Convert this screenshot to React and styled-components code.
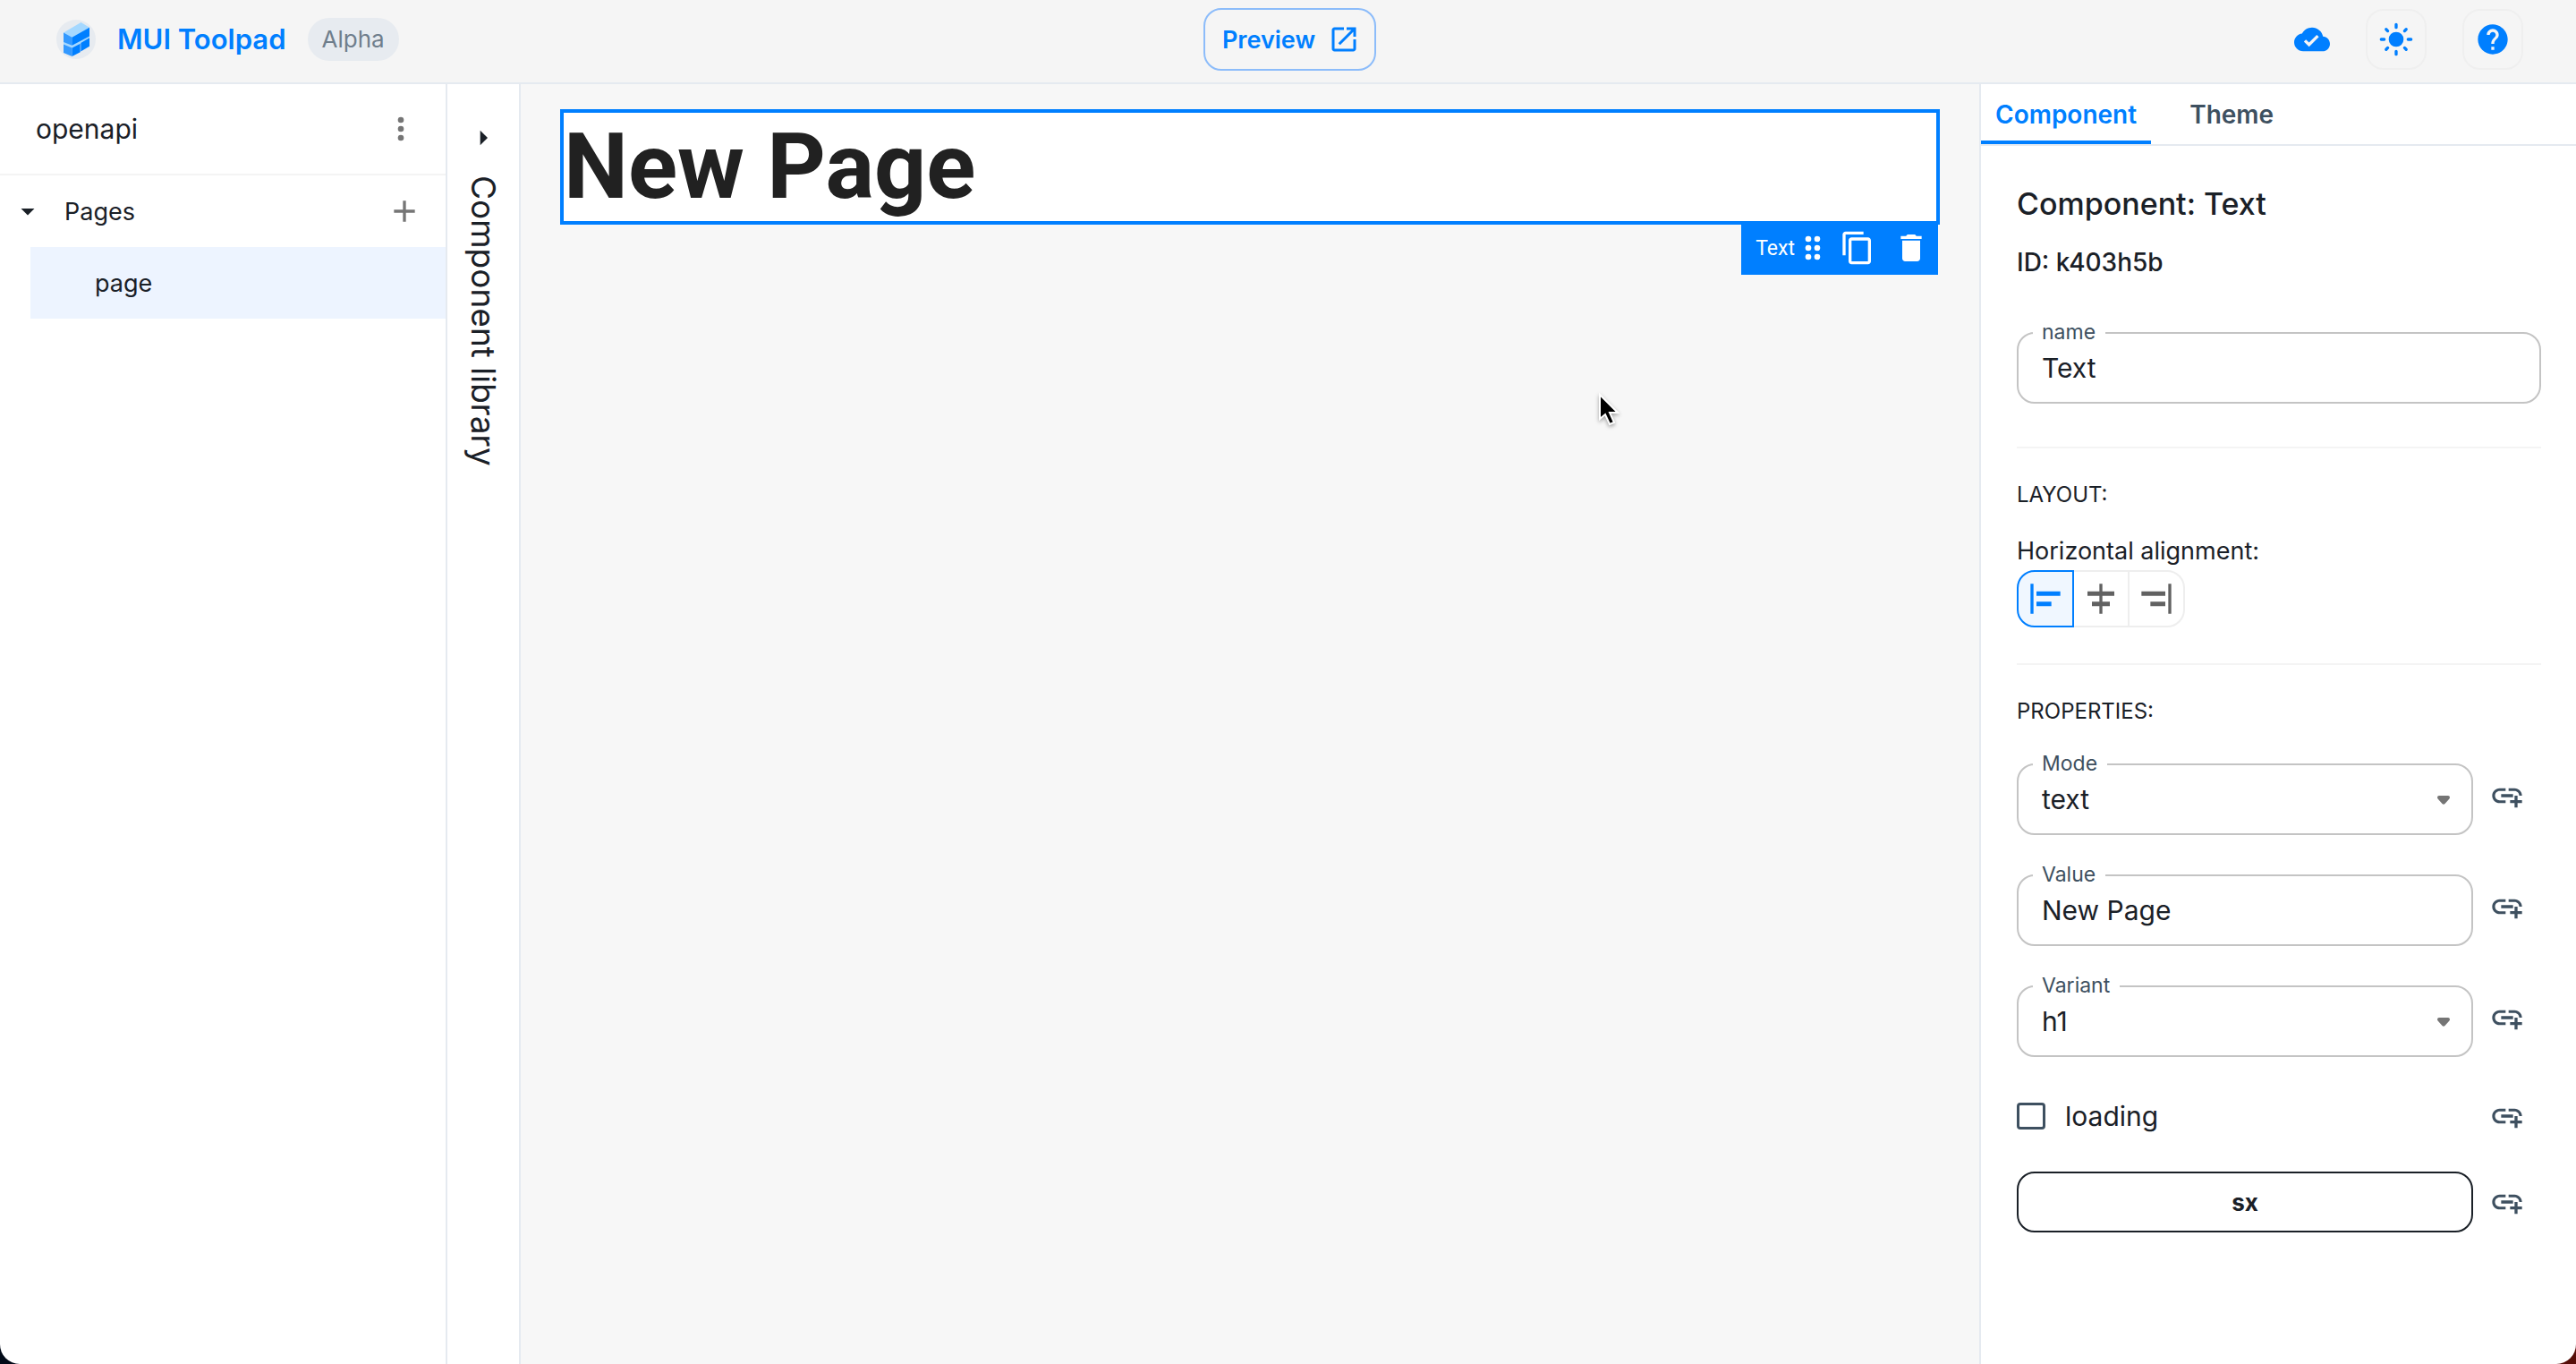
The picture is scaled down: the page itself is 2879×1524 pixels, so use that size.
import React, { useState } from "react";
import styled, { createGlobalStyle, css } from "styled-components";

const color = {
  primary: "#007fff",
  text: "#1a2027",
  secondary: "#3e5060",
  muted: "#6f7e8c",
  icon: "#757575",
  line: "#e5eaf0",
  divider: "#f4f4f4",
  control: "#eeeeee",
  field: "#c4c4c4",
};

const GlobalStyle = createGlobalStyle`
  *, *::before, *::after { box-sizing: border-box; }
  body {
    margin: 0;
    background: linear-gradient(to right, #020a18 50%, #560d08 50%);
    color: ${color.text};
    font-family: Inter, "Liberation Sans", sans-serif;
  }
  h1, h2, h3, p, ul { margin: 0; padding: 0; font-weight: 400; }
  button, input, select { font-family: inherit; }
`;

/* ---------- icons ---------- */

const Svg = styled.svg`
  display: block;
  flex: none;
  width: ${(p) => p.$size || 40}px;
  height: ${(p) => p.$size || 40}px;
  fill: currentColor;
`;

const Icon = ({ d, size, children }) => (
  <Svg viewBox="0 0 24 24" $size={size} aria-hidden="true">
    {d ? <path d={d} /> : children}
  </Svg>
);

const paths = {
  open: "M19 19H5V5h7V3H5c-1.11 0-2 .9-2 2v14c0 1.1.89 2 2 2h14c1.1 0 2-.9 2-2v-7h-2v7zM14 3v2h3.59l-9.83 9.83 1.41 1.41L19 6.41V10h2V3h-7z",
  cloud:
    "M19.35 10.04C18.67 6.59 15.64 4 12 4 9.11 4 6.6 5.64 5.35 8.04 2.34 8.36 0 10.91 0 14c0 3.31 2.69 6 6 6h13c2.76 0 5-2.24 5-5 0-2.64-2.05-4.78-4.65-4.96zM10 17l-3.5-3.5 1.41-1.41L10 14.17 15.18 9l1.41 1.41L10 17z",
  help: "M12 2C6.48 2 2 6.48 2 12s4.48 10 10 10 10-4.48 10-10S17.52 2 12 2zm1 17h-2v-2h2v2zm2.07-7.75l-.9.92C13.45 12.9 13 13.5 13 15h-2v-.5c0-1.1.45-2.1 1.17-2.83l1.24-1.26c.37-.36.59-.86.59-1.41 0-1.1-.9-2-2-2s-2 .9-2 2H8c0-2.21 1.79-4 4-4s4 1.79 4 4c0 .88-.36 1.68-.93 2.25z",
  add: "M19 13h-6v6h-2v-6H5v-2h6V5h2v6h6v2z",
  down: "M7 10l5 5 5-5z",
  right: "M10 17l5-5-5-5z",
  copy: "M16 1H4c-1.1 0-2 .9-2 2v14h2V3h12V1zm3 4H8c-1.1 0-2 .9-2 2v14c0 1.1.9 2 2 2h11c1.1 0 2-.9 2-2V7c0-1.1-.9-2-2-2zm0 16H8V7h11v14z",
  trash: "M6 19c0 1.1.9 2 2 2h8c1.1 0 2-.9 2-2V7H6v12zM19 4h-3.5l-1-1h-5l-1 1H5v2h14V4z",
  alignLeft: "M4 22H2V2h2v20zM22 7H6v3h16V7zm-6 7H6v3h10v-3z",
  alignCenter: "M11 2h2v5h8v3h-8v4h5v3h-5v5h-2v-5H6v-3h5v-4H3V7h8V2z",
  alignRight: "M20 2h2v20h-2V2zM2 10h16V7H2v3zm6 7h10v-3H8v3z",
  link: "M8 11h8v2H8zm12.1 1H22c0-2.76-2.24-5-5-5h-4v1.9h4c1.71 0 3.1 1.39 3.1 3.1zM3.9 12c0-1.71 1.39-3.1 3.1-3.1h4V7H7c-2.76 0-5 2.24-5 5s2.24 5 5 5h4v-1.9H7c-1.71 0-3.1-1.39-3.1-3.1zM19 12h-2v3h-3v2h3v3h2v-3h3v-2h-3z",
};

const SunIcon = () => (
  <Icon>
    <circle cx="12" cy="12" r="5" />
    <g stroke="currentColor" strokeWidth="2" strokeLinecap="round">
      <path d="M12 2v2M12 20v2M2 12h2M20 12h2M5.28 5.28l1.07 1.07M17.65 17.65l1.07 1.07M5.28 18.72l1.07-1.07M17.65 6.35l1.07-1.07" />
    </g>
  </Icon>
);

const DotsIcon = ({ columns }) => (
  <Icon>
    {columns.map((x) =>
      [6, 12, 18].map((y) => <circle key={`${x}-${y}`} cx={x} cy={y} r="2" />)
    )}
  </Icon>
);

const LogoSvg = styled.svg`
  display: block;
  width: 44px;
  height: 44px;
`;

const Logo = () => (
  <LogoSvg viewBox="0 0 44 44" aria-hidden="true">
    <circle cx="22" cy="22" r="22" fill="#e7ebf0" />
    <path fill="#a5d8ff" d="M8 14.5 27.5 3l9.500 5.700L37 20l-9 6-11 5.500-9-4z" />
    <path fill="#3399ff" d="M8 14.500l9.500 5.200v9L8 25z" />
    <path fill="#007fff" d="M17.500 19.700 37 8.700v9.800l-19.500 10.200z" />
    <path fill="#3399ff" d="M8 27.500l9.500 4V41L8 37z" />
    <path fill="#007fff" d="M17.500 31.500l9.200-4.800v9.500L17.500 41z" />
    <path fill="#007fff" d="M27.300 26 37 20.300v9.500l-9.700 5.700z" />
  </LogoSvg>
);

/* ---------- frame ---------- */

const Frame = styled.div`
  display: grid;
  grid-template-rows: auto 1fr;
  min-height: 100vh;
  border-radius: 0 0 22px 22px;
  overflow: hidden;
  background: #ffffff;
`;

const Header = styled.header`
  display: grid;
  grid-template-columns: 1fr auto 1fr;
  align-items: center;
  padding: 9px 59px 13px 63px;
  background: #f5f5f5;
  border-bottom: 2px solid ${color.line};
`;

const Brand = styled.div`
  display: flex;
  align-items: center;
  gap: 24px;
`;

const BrandLink = styled.a`
  display: flex;
  align-items: center;
  gap: 24px;
  color: ${color.primary};
  font-size: 31px;
  font-weight: 600;
  line-height: 48px;
  text-decoration: none;
`;

const Chip = styled.span`
  padding: 0 16px;
  border-radius: 24px;
  background: #e7ebf0;
  color: ${color.muted};
  font-size: 26px;
  line-height: 48px;
`;

const bareButton = css`
  display: flex;
  align-items: center;
  justify-content: center;
  padding: 0;
  border: 0;
  background: none;
  color: inherit;
  cursor: pointer;
`;

const PreviewButton = styled.button`
  ${bareButton}
  gap: 14px;
  height: 70px;
  padding: 0 16px 0 19px;
  border: 2px solid #8cbcfa;
  border-radius: 20px;
  color: ${color.primary};
  font-size: 27px;
  font-weight: 600;
`;

const Actions = styled.div`
  display: flex;
  justify-content: flex-end;
  align-items: center;
  gap: 40px;
  color: ${color.primary};
`;

const SquareButton = styled.button`
  ${bareButton}
  width: 68px;
  height: 68px;
  border: 2px solid #efefef;
  border-radius: 20px;
`;

const Workspace = styled.div`
  display: grid;
  grid-template-columns: 500px 82px minmax(0, 1fr) 667px;
`;

/* ---------- sidebar ---------- */

const Sidebar = styled.nav`
  border-right: 2px solid ${color.line};
`;

const SidebarHeader = styled.div`
  display: flex;
  align-items: center;
  justify-content: space-between;
  height: 102px;
  padding: 0 30px 0 40px;
  border-bottom: 2px solid ${color.divider};
  font-size: 30px;
`;

const IconButton = styled.button`
  ${bareButton}
  color: ${color.icon};
`;

const TreeRow = styled.div`
  display: flex;
  align-items: center;
  height: 80px;
  padding: 0 26px 0 13px;
`;

const TreeToggle = styled.button`
  ${bareButton}
  justify-content: flex-start;
  flex: 1;
  gap: 23px;
  font-size: 27px;
`;

const TreeItem = styled.a`
  display: flex;
  align-items: center;
  height: 80px;
  margin-left: 34px;
  padding-left: 72px;
  background: #edf4ff;
  color: ${color.text};
  font-size: 27px;
  text-decoration: none;
`;

const Rail = styled.aside`
  border-right: 2px solid ${color.line};
  padding-top: 40px;
`;

const RailButton = styled.button`
  ${bareButton}
  flex-direction: column;
  gap: 22px;
  width: 100%;
  font-size: 37px;
  line-height: 48px;
`;

const RailLabel = styled.span`
  writing-mode: vertical-rl;
`;

/* ---------- canvas ---------- */

const Canvas = styled.main`
  position: relative;
  padding: 28px 44px;
  background: #f7f7f7;
`;

const Selection = styled.section`
  position: relative;
  border: 4px solid ${color.primary};
  background: #ffffff;
`;

const PageHeading = styled.h1`
  && {
    color: #212121;
    font-family: Roboto, "Liberation Sans", sans-serif;
    font-size: 102px;
    font-weight: 700;
    line-height: 121px;
  }
`;

const NodeHud = styled.div`
  position: absolute;
  top: 100%;
  right: -2px;
  display: flex;
  align-items: center;
  height: 60px;
  padding-left: 16px;
  background: ${color.primary};
  color: #ffffff;
  font-family: Roboto, "Liberation Sans", sans-serif;
  font-size: 23px;
`;

const HudButton = styled.button`
  ${bareButton}
  width: 60px;
  height: 60px;
`;

const Pointer = styled.svg`
  position: absolute;
  top: 343px;
  left: 73.8%;
  width: 28px;
  height: 40px;
  filter: drop-shadow(0 2px 2px rgba(0, 0, 0, 0.35));
`;

/* ---------- inspector ---------- */

const Inspector = styled.aside`
  border-left: 2px solid ${color.line};
`;

const Tabs = styled.div`
  display: flex;
  border-bottom: 2px solid ${color.line};
`;

const Tab = styled.button`
  ${bareButton}
  min-width: 180px;
  height: 67px;
  padding: 4px 16px 0;
  border-bottom: 4px solid ${(p) => (p.$active ? color.primary : "transparent")};
  color: ${(p) => (p.$active ? color.primary : color.secondary)};
  font-size: 28px;
  font-weight: 600;
`;

const InspectorBody = styled.div`
  display: flex;
  flex-direction: column;
  padding: 36px 39px 40px 40px;
`;

const Title = styled.h2`
  && {
    margin-bottom: 14px;
    font-size: 34px;
    font-weight: 500;
    line-height: 58px;
  }
`;

const NodeId = styled.p`
  && {
    margin-bottom: 40px;
    font-size: 28px;
    font-weight: 500;
    line-height: 44px;
  }
`;

const Rule = styled.hr`
  width: 100%;
  height: 2px;
  margin: 40px 0 32px;
  border: 0;
  background: ${color.divider};
`;

const Overline = styled.h3`
  && {
    margin-bottom: 22px;
    font-size: 24px;
    line-height: 40px;
    text-transform: uppercase;
  }
`;

const GroupLabel = styled.p`
  font-size: 27px;
  line-height: 42px;
`;

const ToggleGroup = styled.div`
  display: flex;
`;

const Toggle = styled.button`
  ${bareButton}
  width: 64px;
  height: 64px;
  border: 2px solid ${color.control};
  color: #616161;

  & + & {
    margin-left: -2px;
  }
  &:first-child {
    border-radius: 20px 0 0 20px;
  }
  &:last-child {
    border-radius: 0 20px 20px 0;
  }
  ${(p) =>
    p.$active &&
    css`
      z-index: 1;
      border-color: ${color.primary};
      background: #f0f7ff;
      color: ${color.primary};
    `}
`;

const FieldBox = styled.div`
  position: relative;
  flex: 1;
  margin: 16px 0 8px;
`;

const FieldLabel = styled.label`
  position: absolute;
  top: -14px;
  left: 18px;
  padding: 0 11px 0 10px;
  background: #ffffff;
  color: ${color.secondary};
  font-size: 23px;
  line-height: 28px;
`;

const control = css`
  display: block;
  width: 100%;
  height: 80px;
  margin: 0;
  padding: 0 26px;
  border: 2px solid ${color.field};
  border-radius: 20px;
  outline: 0;
  background: transparent;
  color: ${color.text};
  font-size: 30px;
`;

const TextInput = styled.input`
  ${control}
`;

const SelectInput = styled.select`
  ${control}
  appearance: none;
`;

const SelectArrow = styled.svg`
  position: absolute;
  top: 36px;
  right: 26px;
  width: 14px;
  height: 10px;
  fill: ${color.icon};
  pointer-events: none;
`;

const Properties = styled.div`
  display: grid;
  gap: 20px;
`;

const PropertyRow = styled.div`
  display: flex;
  align-items: center;
`;

const BindButton = styled.button`
  ${bareButton}
  width: 76px;
  height: 76px;
  color: ${color.secondary};
`;

const CheckLabel = styled.label`
  display: flex;
  flex: 1;
  align-items: center;
  gap: 22px;
  font-size: 30px;
`;

const Checkbox = styled.input`
  appearance: none;
  width: 32px;
  height: 30px;
  margin: 0;
  border: 3px solid ${color.secondary};
  border-radius: 4px;
  background: #ffffff;

  &:checked {
    background: ${color.primary};
  }
`;

const SxButton = styled.button`
  ${bareButton}
  flex: 1;
  height: 68px;
  border: 2px solid ${color.text};
  border-radius: 20px;
  font-size: 26px;
  font-weight: 700;
`;

const TextField = ({ id, label, defaultValue }) => (
  <FieldBox>
    <TextInput id={id} type="text" defaultValue={defaultValue} />
    <FieldLabel htmlFor={id}>{label}</FieldLabel>
  </FieldBox>
);

const SelectField = ({ id, label, defaultValue, options }) => (
  <FieldBox>
    <SelectInput id={id} defaultValue={defaultValue}>
      {options.map((o) => (
        <option key={o}>{o}</option>
      ))}
    </SelectInput>
    <FieldLabel htmlFor={id}>{label}</FieldLabel>
    <SelectArrow viewBox="0 0 14 10" aria-hidden="true">
      <path d="M2 0h10q2 0 2 2 0 1-1 2L8.500 9q-1.500 1.500-3 0L1 4Q0 3 0 2 0 0 2 0z" />
    </SelectArrow>
  </FieldBox>
);

const Property = ({ name, children }) => (
  <PropertyRow>
    {children}
    <BindButton type="button" aria-label={`Bind ${name}`}>
      <Icon d={paths.link} />
    </BindButton>
  </PropertyRow>
);

const alignments = [
  ["start", paths.alignLeft],
  ["center", paths.alignCenter],
  ["end", paths.alignRight],
];

export default function App() {
  const [tab, setTab] = useState("Component");
  const [align, setAlign] = useState("start");

  return (
    <>
      <GlobalStyle />
      <Frame>
        <Header>
          <Brand>
            <BrandLink href="#home">
              <Logo />
              MUI Toolpad
            </BrandLink>
            <Chip>Alpha</Chip>
          </Brand>
          <PreviewButton type="button">
            Preview
            <Icon d={paths.open} size={36} />
          </PreviewButton>
          <Actions>
            <Icon d={paths.cloud} />
            <SquareButton type="button" aria-label="Toggle theme">
              <SunIcon />
            </SquareButton>
            <SquareButton type="button" aria-label="Help">
              <Icon d={paths.help} />
            </SquareButton>
          </Actions>
        </Header>

        <Workspace>
          <Sidebar>
            <SidebarHeader>
              <span>openapi</span>
              <IconButton type="button" aria-label="App menu">
                <DotsIcon columns={[12]} />
              </IconButton>
            </SidebarHeader>
            <TreeRow>
              <TreeToggle type="button">
                <Icon d={paths.down} size={36} />
                Pages
              </TreeToggle>
              <IconButton type="button" aria-label="Add page">
                <Icon d={paths.add} />
              </IconButton>
            </TreeRow>
            <TreeItem href="#page">page</TreeItem>
          </Sidebar>

          <Rail>
            <RailButton type="button">
              <Icon d={paths.right} />
              <RailLabel>Component library</RailLabel>
            </RailButton>
          </Rail>

          <Canvas>
            <Selection>
              <PageHeading>New Page</PageHeading>
              <NodeHud>
                Text
                <DotsIcon columns={[9, 15]} />
                <HudButton type="button" aria-label="Duplicate">
                  <Icon d={paths.copy} />
                </HudButton>
                <HudButton type="button" aria-label="Delete">
                  <Icon d={paths.trash} />
                </HudButton>
              </NodeHud>
            </Selection>
            <Pointer viewBox="0 0 28 40" aria-hidden="true">
              <path
                d="M3 4v27l6-5 5 11 5-2-5-11h9z"
                fill="#000000"
                stroke="#ffffff"
                strokeWidth="2"
              />
            </Pointer>
          </Canvas>

          <Inspector>
            <Tabs role="tablist">
              {["Component", "Theme"].map((name) => (
                <Tab
                  key={name}
                  type="button"
                  role="tab"
                  aria-selected={tab === name}
                  $active={tab === name}
                  onClick={() => setTab(name)}
                >
                  {name}
                </Tab>
              ))}
            </Tabs>
            <InspectorBody>
              <Title>Component: Text</Title>
              <NodeId>ID: k403h5b</NodeId>
              <TextField id="node-name" label="name" defaultValue="Text" />
              <Rule />
              <Overline>Layout:</Overline>
              <GroupLabel id="align-label">Horizontal alignment:</GroupLabel>
              <ToggleGroup role="group" aria-labelledby="align-label">
                {alignments.map(([value, d]) => (
                  <Toggle
                    key={value}
                    type="button"
                    aria-label={value}
                    aria-pressed={align === value}
                    $active={align === value}
                    onClick={() => setAlign(value)}
                  >
                    <Icon d={d} />
                  </Toggle>
                ))}
              </ToggleGroup>
              <Rule />
              <Overline>Properties:</Overline>
              <Properties>
                <Property name="mode">
                  <SelectField
                    id="mode"
                    label="Mode"
                    defaultValue="text"
                    options={["text", "markdown", "link"]}
                  />
                </Property>
                <Property name="value">
                  <TextField id="value" label="Value" defaultValue="New Page" />
                </Property>
                <Property name="variant">
                  <SelectField
                    id="variant"
                    label="Variant"
                    defaultValue="h1"
                    options={["h1", "h2", "h3", "body1"]}
                  />
                </Property>
                <Property name="loading">
                  <CheckLabel htmlFor="loading">
                    <Checkbox id="loading" type="checkbox" />
                    loading
                  </CheckLabel>
                </Property>
                <Property name="sx">
                  <SxButton type="button">sx</SxButton>
                </Property>
              </Properties>
            </InspectorBody>
          </Inspector>
        </Workspace>
      </Frame>
    </>
  );
}
